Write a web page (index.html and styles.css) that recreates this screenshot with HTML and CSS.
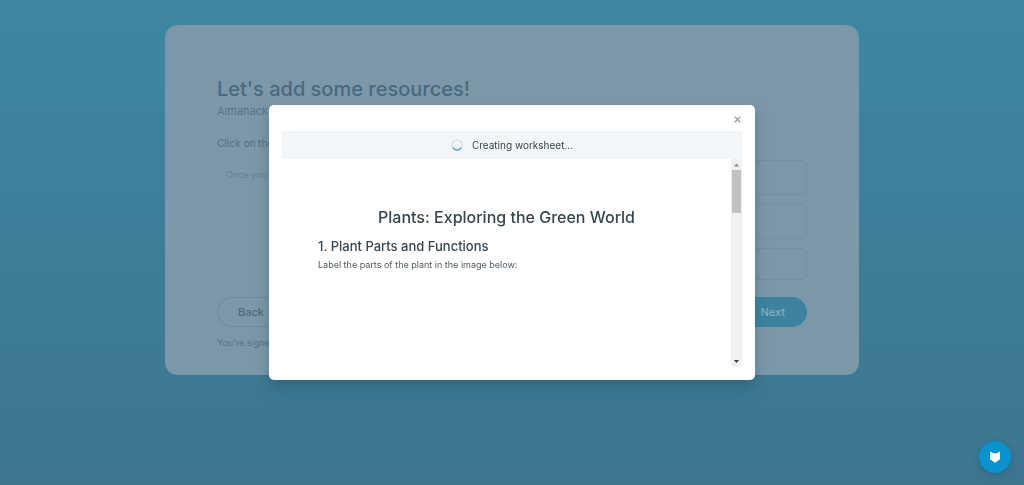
FILE: index.html
```html
<!DOCTYPE html>
<html lang="en">
<head>
<meta charset="utf-8">
<meta name="viewport" content="width=device-width, initial-scale=1">
<title>Almanack</title>
<link rel="stylesheet" href="styles.css">
</head>
<body>
<main class="card">
  <h1 class="card-title">Let's add some resources!</h1>
  <p class="card-lead">Almanack</p>
  <p class="card-hint">Click on the</p>
  <div class="resources">
    <p class="resources-note">Once you r</p>
    <div class="resource-list">
      <div class="resource"></div>
      <div class="resource"></div>
      <div class="resource"></div>
    </div>
  </div>
  <div class="actions">
    <button class="btn btn-outline" type="button">Back</button>
    <button class="btn btn-solid" type="button">Next</button>
  </div>
  <p class="signed">You're signed</p>
</main>

<div class="overlay">
  <section class="modal" role="dialog" aria-modal="true" aria-labelledby="sheet-title">
    <div class="modal-head">
      <button class="close" type="button" aria-label="Close">
        <svg width="7" height="7" viewBox="0 0 7 7" aria-hidden="true"><path d="M.6.6l5.8 5.8M6.4.6L.6 6.4" stroke="#87949a" stroke-width="1.2" fill="none"/></svg>
      </button>
    </div>
    <div class="status" role="status">
      <svg width="12" height="12" viewBox="0 0 12 12" fill="none" aria-hidden="true">
        <circle cx="6" cy="6" r="5" stroke="#cfdfe7" stroke-width="1.2"/>
        <path d="M1.7 8.5A5 5 0 0 0 10.3 8.5" stroke="#49a9d0" stroke-width="1.4"/>
      </svg>
      <span>Creating worksheet...</span>
    </div>
    <div class="viewer">
      <article class="sheet">
        <h2 class="sheet-title" id="sheet-title">Plants: Exploring the Green World</h2>
        <h3 class="sheet-section">1. Plant Parts and Functions</h3>
        <p class="sheet-text">Label the parts of the plant in the image below:</p>
      </article>
      <div class="scrollbar" aria-hidden="true">
        <svg class="arrow" width="11" height="11" viewBox="0 0 11 11"><path d="M3 7.5L5.5 4.5L8 7.5z" fill="#8b8b8b"/></svg>
        <div class="track"><div class="thumb"></div></div>
        <svg class="arrow" width="11" height="11" viewBox="0 0 11 11"><path d="M2.8 4L5.5 7L8.2 4z" fill="#444"/></svg>
      </div>
    </div>
  </section>
</div>

<button class="helper" type="button" aria-label="Open help">
  <svg width="12" height="12" viewBox="0 0 12 12" aria-hidden="true"><path d="M1 .3L4 2.2H8L11 .3V8.3L6 11.7L1 8.3z" fill="#fff"/></svg>
</button>
</body>
</html>
```
FILE: styles.css
```css
* { box-sizing: border-box; }

body {
  margin: 0;
  min-height: 100vh;
  padding: 25px 16px;
  background: linear-gradient(#3d87a3, #3d758f);
  font-family: Inter, "Liberation Sans", sans-serif;
  color: #37454e;
}

h1, h2, h3, p { margin: 0; font-weight: 400; }
button { font: inherit; border: 0; padding: 0; cursor: pointer; }

.card {
  max-width: 694px;
  margin: 0 auto;
  padding: 52px 52px 24px;
  border-radius: 13px;
  background: #7c98a8;
}
.card-title { font-size: 20px; line-height: 24px; font-weight: 500; color: #48697e; }
.card-lead { font-size: 11px; line-height: 20px; color: #587484; }
.card-hint { margin-top: 12px; font-size: 10px; line-height: 20px; font-weight: 500; color: #5a7482; }

.resources {
  display: grid;
  grid-template-columns: 1fr 1fr;
  gap: 16px;
  margin-top: 7px;
}
.resources-note { padding: 8px 9px; font-size: 9px; line-height: 14px; color: #67818f; }
.resource-list { display: grid; gap: 9px; }
.resource { height: 35px; border: 1px solid #7490a0; border-radius: 5px; }
.resource:last-child { height: 32px; }

.actions { display: flex; justify-content: space-between; margin-top: 17px; }
.btn { padding: 0 22px; height: 30px; border-radius: 15px; font-size: 11px; font-weight: 500; }
.btn-outline { padding: 0 20px; background: transparent; border: 1px solid #6d8a99; color: #4f6a78; }
.btn-solid { background: #3d83a0; color: #86adbd; }
.signed { margin-top: 8px; font-size: 9px; line-height: 16px; color: #587483; }

.overlay {
  position: fixed;
  inset: 0;
  display: flex;
  align-items: center;
  justify-content: center;
  padding: 16px;
}
.modal {
  display: flex;
  flex-direction: column;
  width: 100%;
  max-width: 486px;
  padding: 0 13px 13px;
  border-radius: 5px;
  background: #fff;
  box-shadow: 0 8px 14px rgba(35, 70, 88, .35);
}
.modal-head { display: flex; justify-content: flex-end; height: 26px; }
.close { width: 9px; height: 28px; background: transparent; }
.close svg { display: block; margin: auto; }
.status {
  display: flex;
  align-items: center;
  justify-content: center;
  gap: 9px;
  height: 28px;
  background: #f3f6f8;
  font-size: 10px;
}
.viewer { display: flex; height: 208px; }
.sheet { flex: 1; padding: 46px 36px 0; }
.sheet-title { font-size: 16px; line-height: 24px; font-weight: 500; text-align: center; }
.sheet-section { margin-top: 7px; font-size: 13px; line-height: 20px; font-weight: 500; }
.sheet-text { font-size: 9px; line-height: 18px; color: #4e5a62; }

.scrollbar { display: flex; flex-direction: column; width: 11px; background: #f1f1f1; }
.arrow { display: block; flex: none; }
.track { flex: 1; padding: 0 1px; }
.thumb { height: 43px; background: #c1c1c1; }

.helper {
  position: fixed;
  right: 13px;
  bottom: 12px;
  width: 32px;
  height: 32px;
  border-radius: 50%;
  background: #0793ce;
  box-shadow: 0 2px 6px rgba(20, 60, 85, .3);
}
.helper svg { display: block; margin: auto; }
```
